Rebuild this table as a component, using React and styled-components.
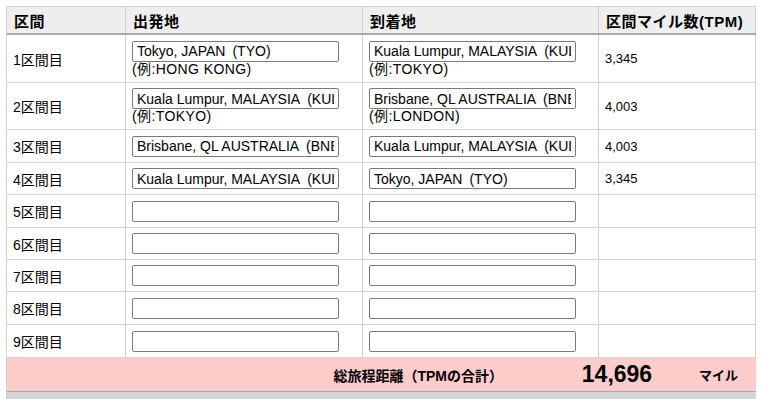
import React from 'react';
import styled, { createGlobalStyle } from 'styled-components';

const GlobalStyle = createGlobalStyle`
    body {
        margin: 0;
        background: #fff;
        font-family: "Liberation Sans", "Noto Sans CJK JP", sans-serif;
        color: #000;
    }
`;

const Board = styled.div`
    margin: 6px 0 0 6px;
    width: 750px;
    border-top: 1px solid #d0d0d0;
    border-left: 1px solid #d0d0d0;
    box-sizing: border-box;
`;

const Row = styled.div`
    display: grid;
    grid-template-columns: 119px 237px 236px 157px;
    height: ${(p) => p.$h}px;
    box-sizing: border-box;
    border-bottom: 1px solid #d4d4d4;
`;

const HeadRow = styled(Row)`
    background: #eeeeee;
    border-bottom: 2px solid #aaaaaa;
`;

const HeadCell = styled.div`
    display: flex;
    align-items: center;
    padding-left: 7px;
    border-right: 1px solid #d0d0d0;
    font-size: 15px;
    font-weight: bold;
    letter-spacing: 0.5px;
    white-space: nowrap;
`;

const Cell = styled.div`
    display: flex;
    flex-direction: column;
    justify-content: center;
    padding-left: ${(p) => p.$pad || 6}px;
    border-right: 1px solid #d0d0d0;
    font-size: ${(p) => p.$size || 14}px;
    min-width: 0;
`;

const CityInput = styled.input`
    box-sizing: border-box;
    width: 207px;
    height: 21px;
    margin: 0;
    padding: 0 4px;
    border: 1px solid #7a7a7a;
    border-radius: 2px;
    font-family: inherit;
    font-size: 14px;
    color: #000;
    background: #fff;
    outline: none;
`;

const Hint = styled.div`
    font-size: 14px;
    line-height: 15px;
    letter-spacing: 0.4px;
    white-space: nowrap;
`;

const Footer = styled.div`
    display: flex;
    align-items: center;
    height: 34px;
    box-sizing: border-box;
    background: #ffcccc;
    border-bottom: 1px solid #a8a8a8;
    font-weight: bold;
`;

const FooterLabel = styled.div`
    flex: 1;
    text-align: right;
    padding-right: 44px;
    font-size: 14px;
`;

const Total = styled.div`
    width: 140px;
    text-align: center;
    font-size: 23px;
    font-family: "Liberation Sans", sans-serif;
`;

const Unit = styled.div`
    width: 69px;
    padding-left: 12px;
    box-sizing: border-box;
    font-size: 13px;
`;

const Shelf = styled.div`
    height: 10px;
    background: #d4d4d4;
`;

// en space before the airport code keeps the gap of the original labels
const city = (name, code) => `${name}\u2002(${code})`;

const legs = [
    { from: city('Tokyo, JAPAN', 'TYO'), to: city('Kuala Lumpur, MALAYSIA', 'KUL'), fromHint: '(例:HONG KONG)', toHint: '(例:TOKYO)', tpm: '3,345' },
    { from: city('Kuala Lumpur, MALAYSIA', 'KUL'), to: city('Brisbane, QL AUSTRALIA', 'BNE'), fromHint: '(例:TOKYO)', toHint: '(例:LONDON)', tpm: '4,003' },
    { from: city('Brisbane, QL AUSTRALIA', 'BNE'), to: city('Kuala Lumpur, MALAYSIA', 'KUL'), tpm: '4,003' },
    { from: city('Kuala Lumpur, MALAYSIA', 'KUL'), to: city('Tokyo, JAPAN', 'TYO'), tpm: '3,345' },
    {}, {}, {}, {}, {},
];

const heights = [48, 47, 33, 32, 33, 32, 32, 33, 33];

const City = ({ value, hint }) => (
    <>
        <CityInput defaultValue={value || ''} />
        {hint && <Hint>{hint}</Hint>}
    </>
);

const App = () => (
    <>
        <GlobalStyle />
        <Board>
            <HeadRow $h={28}>
                <HeadCell>区間</HeadCell>
                <HeadCell>出発地</HeadCell>
                <HeadCell>到着地</HeadCell>
                <HeadCell>区間マイル数(TPM)</HeadCell>
            </HeadRow>
            {legs.map((leg, i) => (
                <Row key={i} $h={heights[i]}>
                    <Cell>{i + 1}区間目</Cell>
                    <Cell $pad={6}>
                        <City value={leg.from} hint={leg.fromHint} />
                    </Cell>
                    <Cell $pad={6}>
                        <City value={leg.to} hint={leg.toHint} />
                    </Cell>
                    <Cell $size={13}>{leg.tpm}</Cell>
                </Row>
            ))}
            <Footer>
                <FooterLabel>総旅程距離（TPMの合計）</FooterLabel>
                <Total>14,696</Total>
                <Unit>マイル</Unit>
            </Footer>
            <Shelf />
        </Board>
    </>
);

export default App;
